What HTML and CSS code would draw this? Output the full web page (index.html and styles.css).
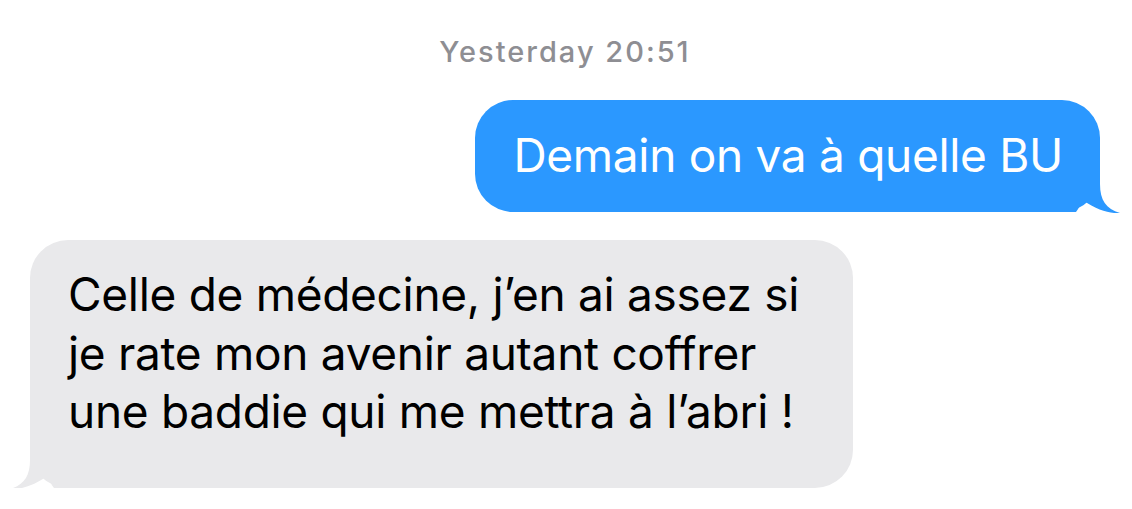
FILE: index.html
```html
<!DOCTYPE html>
<html lang="fr">
<head>
<meta charset="utf-8">
<link rel="stylesheet" href="styles.css">
</head>
<body>
<div class="thread">
  <div class="stamp">Yesterday 20:51</div>
  <div class="row row-out">
    <div class="bubble bubble-out">
      <span class="text">Demain on va à quelle BU</span>
      <svg class="tail tail-out" width="80" height="63" viewBox="0 0 80 63"><path d="M0 0 H60 V34 C60 50 66 59 80 63 C71 64 57 60 44 51 C41 53 39 58 36 62 H0 Z" fill="#2b98ff"/></svg>
    </div>
  </div>
  <div class="row row-in">
    <div class="bubble bubble-in">
      <span class="text">Celle de médecine, j’en ai assez si<br>je rate mon avenir autant coffrer<br>une baddie qui me mettra à l’abri !</span>
      <svg class="tail tail-in" width="80" height="63" viewBox="0 0 80 63"><path d="M80 0 H20 V34 C20 50 14 59 0 63 C9 64 23 60 36 51 C39 53 41 58 44 62 H80 Z" fill="#e9e9eb"/></svg>
    </div>
  </div>
</div>
</body>
</html>
```
FILE: styles.css
```css
html, body {
  margin: 0;
  padding: 0;
  background: #ffffff;
}
body {
  font-family: Inter, "Noto Sans", sans-serif;
}
.thread {
  display: flex;
  flex-direction: column;
  padding: 36px 32px 0 30px;
}
.stamp {
  text-align: center;
  color: #8e8e93;
  font-size: 29px;
  line-height: 32px;
  font-weight: 500;
  letter-spacing: 2px;
  margin-bottom: 32px;
}
.row {
  display: flex;
}
.row-out {
  justify-content: flex-end;
  margin-bottom: 28px;
}
.row-in {
  justify-content: flex-start;
}
.bubble {
  position: relative;
  font-size: 46px;
  letter-spacing: -0.3px;
  border-radius: 38px;
}
.text {
  position: relative;
  z-index: 1;
}
.bubble-out {
  background: #2b98ff;
  color: #ffffff;
  line-height: 58px;
  padding: 26px 37px 28px 38px;
}
.bubble-in {
  background: #e9e9eb;
  color: #000000;
  line-height: 58.5px;
  padding: 25px 54px 47px 38px;
}
.tail {
  position: absolute;
  bottom: -1px;
}
.tail-out {
  right: -20px;
}
.tail-in {
  left: -20px;
}
```
